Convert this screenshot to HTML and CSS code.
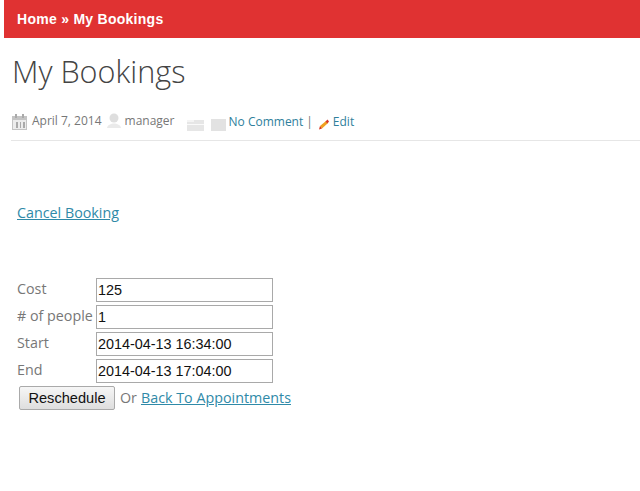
FILE: index.html
```html
<!DOCTYPE html>
<html lang="en">
<head>
<meta charset="utf-8">
<title>My Bookings</title>
<link rel="stylesheet" href="styles.css">
</head>
<body>
<nav class="crumbs"><a href="#">Home</a> <span class="sep">»</span> <a href="#">My Bookings</a></nav>
<main class="content">
  <h1 class="title">My Bookings</h1>
  <div class="meta">
    <svg class="ic ic-cal" width="15" height="16" viewBox="0 0 15 16"><rect y="2" width="15" height="14" fill="#c4c4c4"/><rect x="3" y="0" width="2" height="4" fill="#aaa"/><rect x="10" y="0" width="2" height="4" fill="#aaa"/><rect x="1" y="6" width="13" height="9" fill="#ececec"/><rect x="4" y="8" width="2" height="6" fill="#aaa"/><rect x="8" y="8" width="1" height="6" fill="#aaa"/><rect x="11" y="8" width="2" height="6" fill="#aaa"/></svg>
    <span class="date">April 7, 2014</span>
    <svg class="ic ic-user" width="16" height="16" viewBox="0 0 16 16"><circle cx="8" cy="5" r="4.5" fill="#dedede"/><path d="M1 15 C2 9 14 9 15 15 Z" fill="#eaeaea"/></svg>
    <span class="author">manager</span>
    <svg class="ic ic-folder" width="17" height="11" viewBox="0 0 17 11"><rect width="17" height="11" fill="#e6e6e6"/><rect x="0" y="0" width="7" height="2" fill="#f4f4f4"/><rect y="4" width="17" height="1" fill="#fafafa"/></svg>
    <svg class="ic ic-tag" width="15" height="12" viewBox="0 0 15 12"><rect width="15" height="12" fill="#e2e2e2"/></svg>
    <a class="link comment" href="#">No Comment</a>
    <span class="pipe">|</span>
    <svg class="ic ic-edit" width="12" height="12" viewBox="0 0 12 12"><path d="M2 8 L8 3 L10 5 L4 10.5 Z" fill="#f0a020"/><path d="M2 8 L4 10.5 L1 11.5 Z" fill="#d8341c"/><path d="M7.5 3.5 L9.5 1.5 L11 3.5 L9.5 5.5 Z" fill="#d83a2c"/></svg>
    <a class="link edit" href="#">Edit</a>
  </div>
  <p class="cancel"><a class="ulink" href="#">Cancel Booking</a></p>
  <form class="form">
    <div class="row"><label class="lab">Cost</label><input class="field" value="125"></div>
    <div class="row"><label class="lab"># of people</label><input class="field" value="1"></div>
    <div class="row"><label class="lab">Start</label><input class="field" value="2014-04-13 16:34:00"></div>
    <div class="row"><label class="lab">End</label><input class="field" value="2014-04-13 17:04:00"></div>
    <div class="actions"><button class="btn" type="button">Reschedule</button><span class="or">Or</span><a class="ulink back" href="#">Back To Appointments</a></div>
  </form>
</main>
</body>
</html>
```
FILE: styles.css
```css
html, body { margin: 0; padding: 0; background: #fff; overflow: hidden; }
body { font-family: "Open Sans", sans-serif; font-size: 14.3px; color: #777; height: 491px; }
.crumbs {
  margin-left: 4px;
  height: 38px;
  background: #e03232;
  box-sizing: border-box;
  padding: 10px 0 0 13px;
  font-family: "Liberation Sans", sans-serif;
  font-weight: 700;
  font-size: 14px;
  line-height: 18px;
  letter-spacing: 0.27px;
  color: #fff;
}
.crumbs a { color: #fff; text-decoration: none; }
.content { padding-left: 11px; }
.title {
  margin: 13px 0 0 1px;
  font-weight: 300;
  font-size: 30.6px;
  line-height: 40px;
  color: #444;
}
.meta {
  margin-top: 21px;
  height: 28px;
  border-bottom: 1px solid #e6e6e6;
  display: flex;
  align-items: flex-start;
  font-size: 12px;
  line-height: 18px;
  padding-left: 1px;
}
.ic { flex: none; }
.ic-cal { margin-top: 2px; }
.date { margin-left: 5px; }
.ic-user { margin: 1px 0 0 4px; }
.author { margin-left: 3px; }
.ic-folder { margin: 8px 0 0 12px; }
.ic-tag { margin: 7px 0 0 7px; }
.link { color: #2f7f9c; text-decoration: none; }
.comment { margin: 1px 0 0 3px; }
.pipe { margin: 1px 0 0 3px; }
.ic-edit { margin: 6px 0 0 5px; }
.edit { margin: 1px 0 0 3px; }
.cancel { margin: 62px 0 0 6px; line-height: 20px; }
.ulink { color: #2f8aa8; text-decoration: underline; }
.form { margin: 55px 0 0 6px; display: flex; flex-direction: column; gap: 3px; }
.row { display: flex; align-items: flex-start; height: 24px; }
.lab { width: 79px; line-height: 22px; flex: none; }
.field {
  box-sizing: border-box;
  width: 177px;
  height: 24px;
  margin: 0;
  padding: 0 1px;
  border: 1px solid #a9a9a9;
  font-family: "Liberation Sans", sans-serif;
  font-size: 14.4px;
  color: #111;
  background: #fff;
  outline: none;
}
.actions { display: flex; align-items: center; padding-left: 2px; }
.btn {
  box-sizing: border-box;
  width: 96px;
  height: 24px;
  padding: 0;
  border: 1px solid #aaa;
  border-radius: 2px;
  background: linear-gradient(#f6f6f6, #dedede);
  font-family: "Liberation Sans", sans-serif;
  font-size: 14.6px;
  color: #111;
}
.or { margin: 0 4px 2px 5px; }
.back { margin-bottom: 2px; }
```
